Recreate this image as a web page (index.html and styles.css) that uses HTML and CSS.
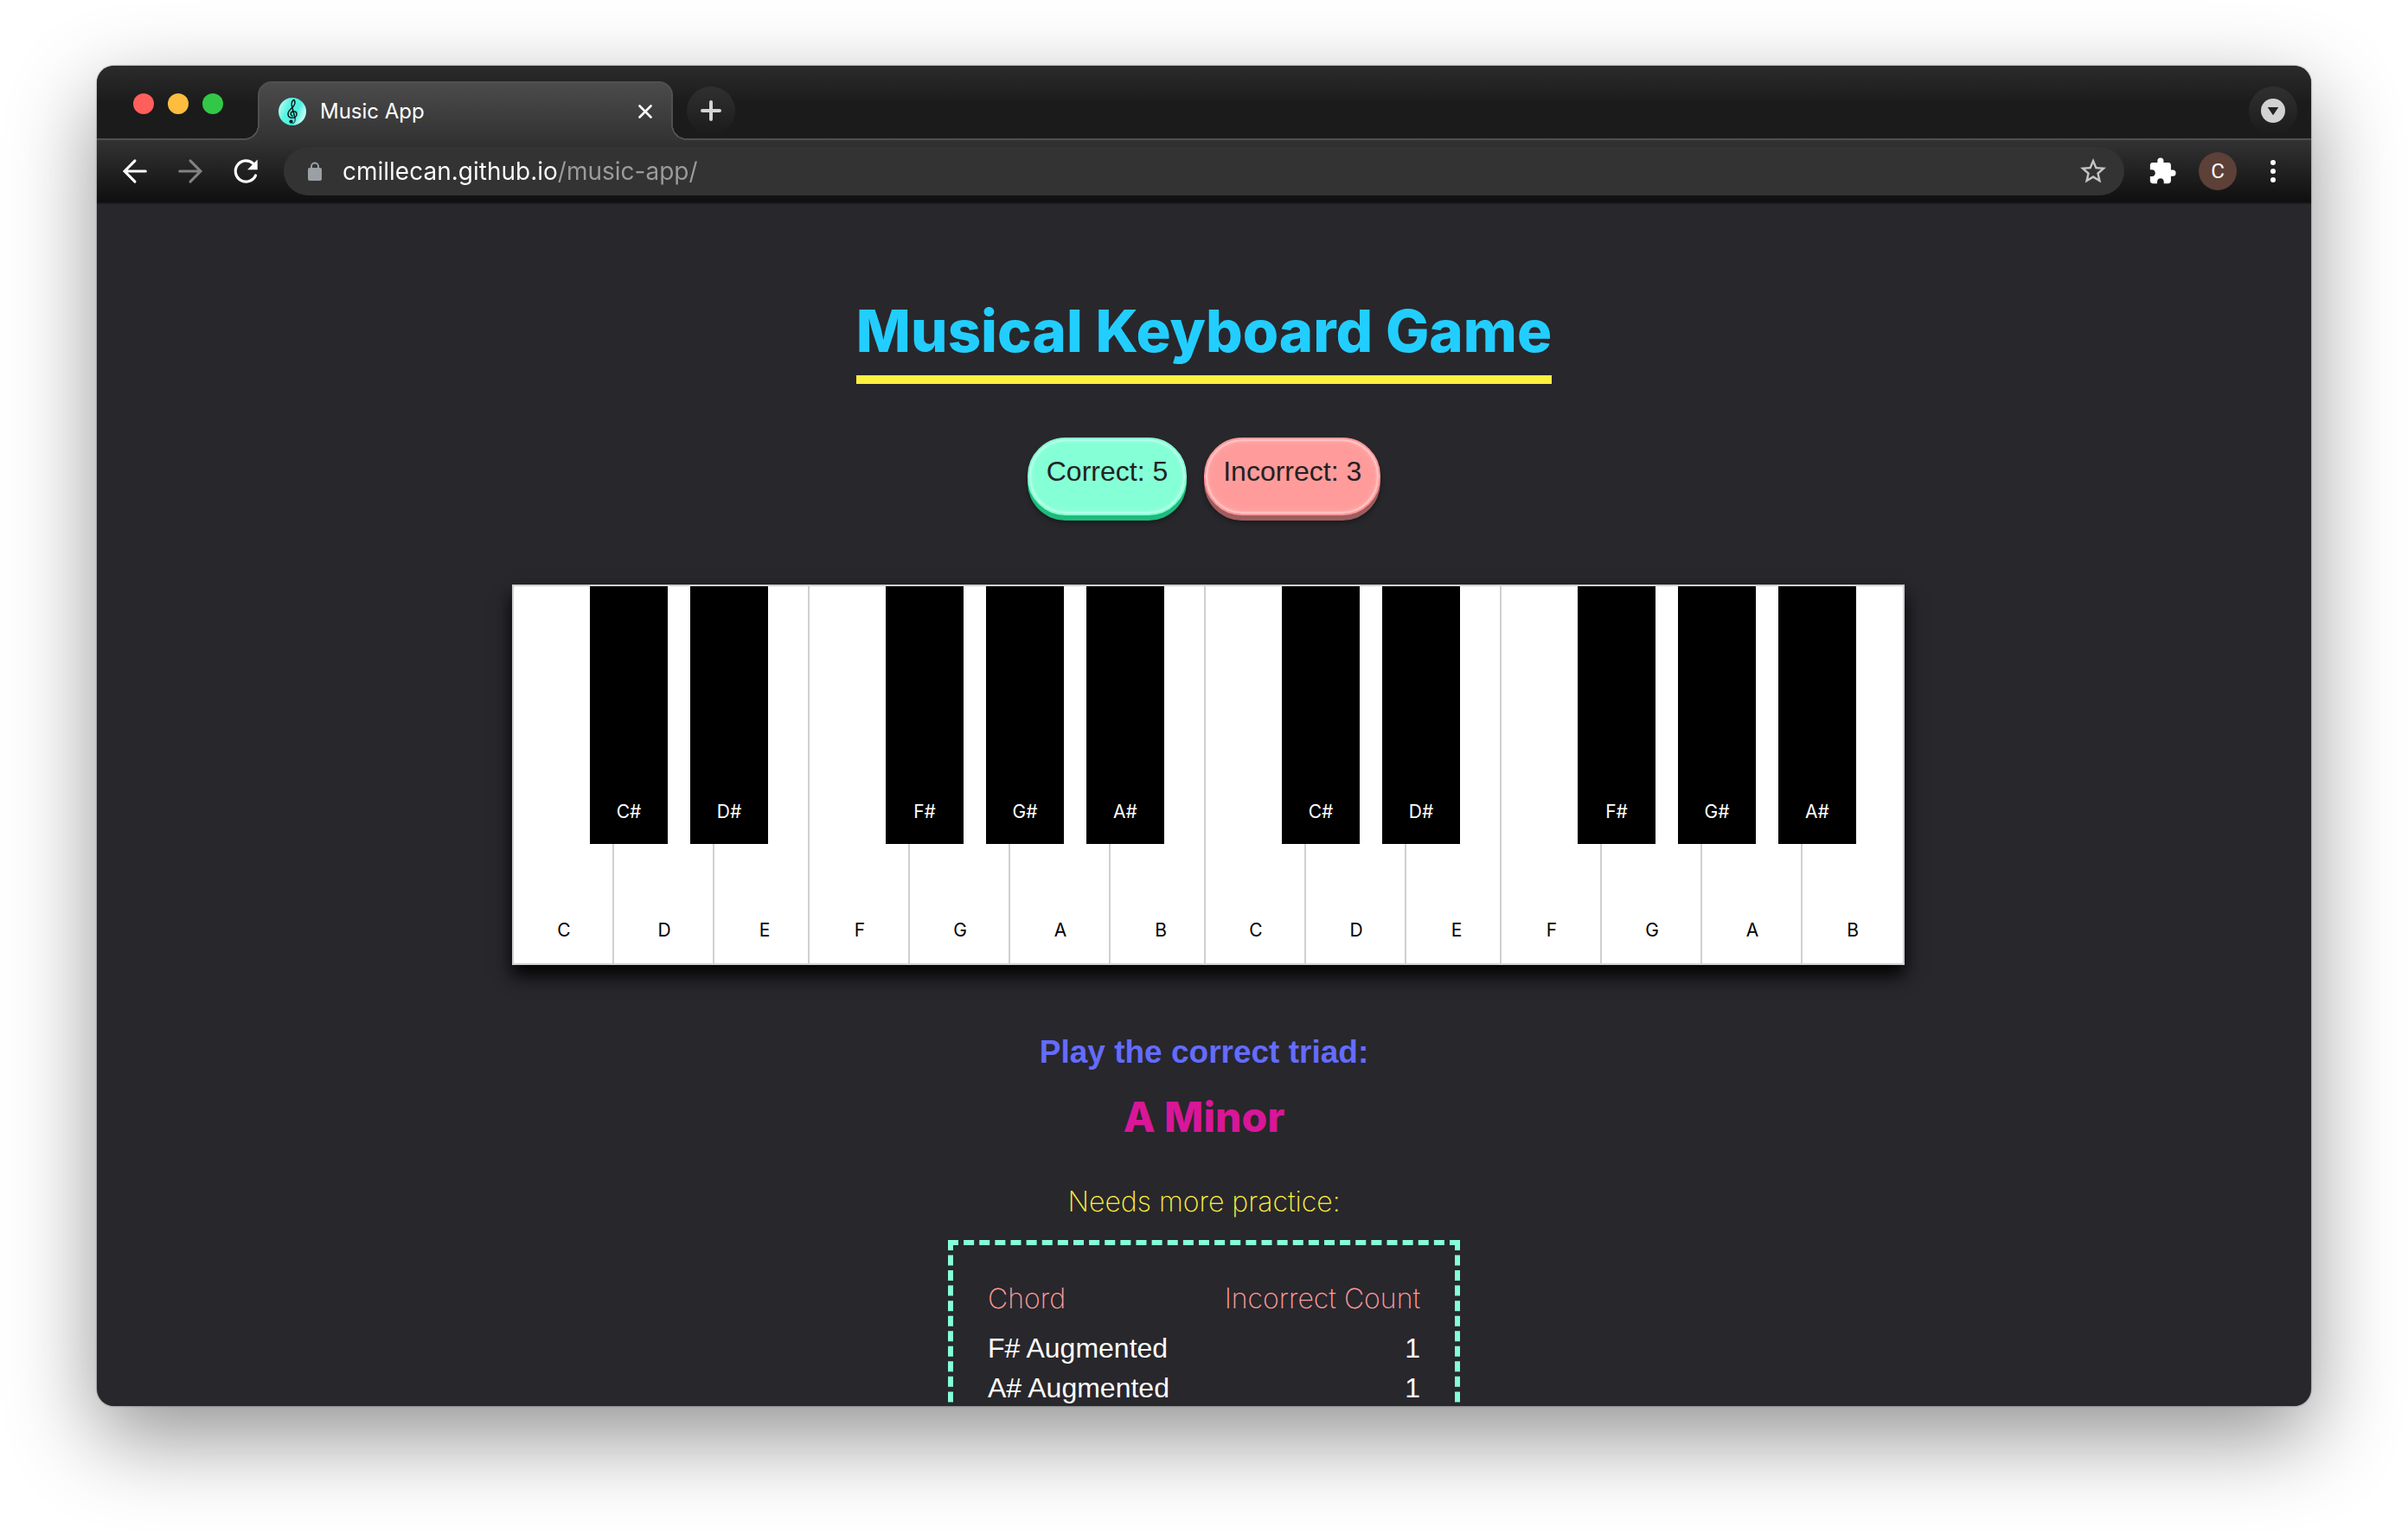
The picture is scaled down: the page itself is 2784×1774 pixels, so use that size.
FILE: index.html
```
<!DOCTYPE html>
<html lang="en">
<head>
<meta charset="utf-8">
<title>Music App</title>
<link rel="stylesheet" href="styles.css">
</head>
<body>
<div class="window">
  <header class="tab-strip">
    <div class="lights">
      <button class="light light-close" aria-label="Close window"></button>
      <button class="light light-minimize" aria-label="Minimize window"></button>
      <button class="light light-zoom" aria-label="Zoom window"></button>
    </div>
    <div class="tab">
      <svg class="favicon" viewBox="0 0 32 32" aria-hidden="true">
        <defs>
          <linearGradient id="disc" x1="0" y1="0" x2="1" y2="0.4">
            <stop offset="0" stop-color="#d8fff8"/>
            <stop offset="0.4" stop-color="#5cf5e4"/>
            <stop offset="0.75" stop-color="#4df0e0"/>
            <stop offset="1" stop-color="#b8fff4"/>
          </linearGradient>
        </defs>
        <circle cx="16" cy="16" r="16" fill="url(#disc)"/>
        <path d="M19 23.500L15.200 8.500C14.600 5.500 16.300 3 18 2.500C19.400 4.500 19.200 7.500 17 10.200C14.500 13 11 15 11 18.700C11 21.800 13.500 23.300 16.200 23.300C19.200 23.300 21 21.300 21 19.200C21 17.200 19.500 15.800 17.500 15.800C15.500 15.800 14.200 17.100 14.200 18.700C14.200 19.900 15 20.700 16 21" fill="none" stroke="#0a1a1a" stroke-width="1.500" stroke-linecap="round"/>
        <path d="M19 23.500C19.800 27.500 18 30 15.500 29.800" fill="none" stroke="#0a1a1a" stroke-width="1"/>
        <circle cx="14.500" cy="27.600" r="2.100" fill="#0a1a1a"/>
      </svg>
      <span class="tab-title">Music App</span>
      <button class="icon-button tab-close" aria-label="Close tab">
        <svg viewBox="0 0 16 16" width="16" height="16"><path d="M1.500 1.500l13 13M14.500 1.500l-13 13" stroke="#fff" stroke-width="2.600" stroke-linecap="round"/></svg>
      </button>
    </div>
    <button class="round-button" aria-label="New tab">
      <svg viewBox="0 0 24 24" width="24" height="24"><path d="M12 2v20M2 12h20" stroke="#d4d4d4" stroke-width="4" stroke-linecap="round"/></svg>
    </button>
    <button class="round-button tab-search" aria-label="Search tabs">
      <svg viewBox="0 0 28 28" width="28" height="28"><circle cx="14" cy="14" r="14" fill="#d2d2d2"/><path d="M7.700 10h12.600L14 19.300z" fill="#222"/></svg>
    </button>
  </header>

  <nav class="toolbar">
    <button class="icon-button" aria-label="Back">
      <svg viewBox="0 0 24 24" width="40" height="40"><path d="M19.400 12H5M12 4.700L4.800 12l7.200 7.300" fill="none" stroke="#fff" stroke-width="1.800" stroke-linecap="round"/></svg>
    </button>
    <button class="icon-button" aria-label="Forward">
      <svg viewBox="0 0 24 24" width="40" height="40"><path d="M4.600 12H19M12 4.700l7.200 7.300-7.200 7.300" fill="none" stroke="#828282" stroke-width="1.800" stroke-linecap="round"/></svg>
    </button>
    <button class="icon-button" aria-label="Reload">
      <svg viewBox="0 0 24 24" width="40" height="40"><path d="M18.900 15A7.300 7.300 0 1 1 17.400 6.800L19 8.500" fill="none" stroke="#fff" stroke-width="1.900" stroke-linecap="round"/><path d="M20.200 3.900v7h-7z" fill="#fff"/></svg>
    </button>
    <div class="omnibox">
      <svg class="lock" viewBox="0 0 24 24" width="40" height="24" aria-hidden="true"><path d="M8 10V6.500a4 4 0 0 1 8 0V10" fill="none" stroke="#9aa0a6" stroke-width="2"/><rect x="4" y="8" width="16" height="15" rx="2" fill="#9aa0a6"/></svg>
      <input class="url" type="text" value="cmillecan.github.io/music-app/" aria-label="Address">
      <button class="icon-button" aria-label="Bookmark this page">
        <svg viewBox="0 0 24 24" width="36" height="36"><path fill="#c4c4c4" d="M22 9.240l-7.190-.62L12 2 9.190 8.630 2 9.240l5.460 4.730L5.820 21 12 17.270 18.180 21l-1.630-7.030L22 9.240zM12 15.400l-3.760 2.270 1-4.280-3.320-2.880 4.380-.38L12 6.100l1.710 4.040 4.380.38-3.320 2.880 1 4.280L12 15.400z"/></svg>
      </button>
    </div>
    <button class="icon-button" aria-label="Extensions">
      <svg viewBox="0 0 24 24" width="34" height="34"><path fill="#fff" d="M20.500 11H19V7c0-1.100-.9-2-2-2h-4V3.500a2.500 2.500 0 0 0-5 0V5H4c-1.100 0-1.990.9-1.990 2v3.800H3.500c1.490 0 2.700 1.210 2.700 2.700s-1.210 2.700-2.700 2.700H2V20c0 1.100.9 2 2 2h3.800v-1.500c0-1.490 1.210-2.700 2.700-2.700s2.700 1.210 2.700 2.700V22H17c1.100 0 2-.9 2-2v-4h1.500a2.500 2.500 0 0 0 0-5z"/></svg>
    </button>
    <button class="avatar" aria-label="Profile">C</button>
    <button class="icon-button" aria-label="Menu">
      <svg viewBox="0 0 8 28" width="8" height="28"><g fill="#fff"><circle cx="4" cy="4" r="3"/><circle cx="4" cy="14" r="3"/><circle cx="4" cy="24" r="3"/></g></svg>
    </button>
  </nav>

  <main class="page">
    <h1 class="title">Musical Keyboard Game</h1>
    <div class="scores">
      <p class="score score-correct">Correct: 5</p>
      <p class="score score-incorrect">Incorrect: 3</p>
    </div>
    <div class="piano-wrap">
      <div class="piano">
        <button class="white">C</button>
        <button class="black">C#</button>
        <button class="white">D</button>
        <button class="black">D#</button>
        <button class="white">E</button>
        <button class="white joined">F</button>
        <button class="black">F#</button>
        <button class="white">G</button>
        <button class="black">G#</button>
        <button class="white">A</button>
        <button class="black">A#</button>
        <button class="white">B</button>
        <button class="white joined">C</button>
        <button class="black">C#</button>
        <button class="white">D</button>
        <button class="black">D#</button>
        <button class="white">E</button>
        <button class="white joined">F</button>
        <button class="black">F#</button>
        <button class="white">G</button>
        <button class="black">G#</button>
        <button class="white">A</button>
        <button class="black">A#</button>
        <button class="white">B</button>
      </div>
    </div>
    <h2 class="prompt">Play the correct triad:</h2>
    <p class="chord">A Minor</p>
    <h3 class="practice-title" id="practice">Needs more practice:</h3>
    <div class="practice">
      <table class="practice-table" aria-labelledby="practice">
        <thead>
          <tr><th scope="col">Chord</th><th scope="col">Incorrect Count</th></tr>
        </thead>
        <tbody>
          <tr><td>F# Augmented</td><td>1</td></tr>
          <tr><td>A# Augmented</td><td>1</td></tr>
        </tbody>
      </table>
    </div>
  </main>
</div>
</body>
</html>
```
FILE: styles.css
```
* {
  box-sizing: border-box;
}

body {
  margin: 0;
  height: 100vh;
  padding: 76px 112px 148px;
  background: #fff;
  font-family: "Liberation Sans", Arial, sans-serif;
  overflow: hidden;
}

h1, h2, h3, p {
  margin: 0;
}

button {
  padding: 0;
  border: 0;
  background: none;
  color: inherit;
  font: inherit;
}

svg {
  display: block;
}

.window {
  display: flex;
  flex-direction: column;
  height: 100%;
  border-radius: 20px;
  background: #28272c;
  overflow: hidden;
  box-shadow: 0 0 2px rgba(0, 0, 0, 0.6), 0 36px 100px rgba(0, 0, 0, 0.43);
}

/* Tab strip */

.tab-strip {
  flex: none;
  display: flex;
  align-items: flex-start;
  height: 86px;
  padding: 0 16px 0 42px;
  border-bottom: 2px solid #505050;
  background: linear-gradient(#2b2b2b, #1b1b1b 44px);
  font-family: Inter, sans-serif;
}

.lights {
  display: flex;
  gap: 16px;
  padding: 32px 40px 0 0;
}

.light {
  width: 24px;
  height: 24px;
  border-radius: 50%;
}

.light-close { background: #ff5f5a; }
.light-minimize { background: #ffbd3f; }
.light-zoom { background: #33c748; }

.tab {
  position: relative;
  display: flex;
  align-items: center;
  gap: 16px;
  width: 480px;
  height: 68px;
  margin: 18px 16px 0 0;
  padding: 0 22px;
  border: 2px solid #505050;
  border-bottom: 0;
  border-radius: 16px 16px 0 0;
  background: linear-gradient(#4b4b4b, #333);
}

/* Curved feet joining the tab to the strip line */
.tab::before,
.tab::after {
  content: "";
  position: absolute;
  bottom: 0;
  width: 18px;
  height: 18px;
}

.tab::before {
  left: -18px;
  background: radial-gradient(circle at 0 0, #1b1b1b 16px, #505050 16px, #505050 18px, #353535 18px);
}

.tab::after {
  right: -18px;
  background: radial-gradient(circle at 100% 0, #1b1b1b 16px, #505050 16px, #505050 18px, #353535 18px);
}

.favicon {
  width: 32px;
  height: 32px;
}

.tab-title {
  flex: 1;
  color: #fff;
  font-size: 24px;
  line-height: 32px;
}

.round-button {
  display: grid;
  place-items: center;
  width: 56px;
  height: 56px;
  margin-top: 24px;
  border-radius: 50%;
  background: linear-gradient(#303030, #1b1b1b);
}

.tab-search {
  margin-left: auto;
}

/* Toolbar */

.toolbar {
  flex: none;
  display: flex;
  align-items: center;
  gap: 24px;
  padding: 8px 24px;
  border-bottom: 2px solid #1a1a1a;
  background: linear-gradient(#333, #0f0f0f);
  font-family: Inter, sans-serif;
}

.icon-button {
  flex: none;
  display: grid;
  place-items: center;
  width: 40px;
  height: 40px;
}

.icon-button.tab-close {
  width: 16px;
}

.omnibox {
  flex: 1;
  display: flex;
  align-items: center;
  height: 56px;
  padding: 0 16px;
  border-radius: 28px;
  background: #333;
}

.lock {
  flex: none;
}

.url {
  flex: 1;
  min-width: 0;
  padding: 0 12px;
  border: 0;
  outline: 0;
  /* host in white, path in grey */
  background: linear-gradient(90deg, #fff 261px, #9c9c9c 261px);
  background-clip: text;
  -webkit-background-clip: text;
  color: transparent;
  font: 28px/40px Inter, sans-serif;
}

.avatar {
  flex: none;
  width: 44px;
  height: 44px;
  margin: 0 -2px;
  border-radius: 50%;
  background: #5d4037;
  color: #fff;
  font: 24px/44px Roboto, sans-serif;
}

/* Game page */

.page {
  flex: 1;
  min-height: 0;
  display: flex;
  flex-direction: column;
  align-items: center;
  padding-top: 100px;
  overflow: hidden;
}

.page > * {
  flex: none;
}

.title {
  padding-bottom: 4px;
  border-bottom: 10px solid #fff03f;
  color: #22ceff;
  font: 800 67px/94px Inter, sans-serif;
}

.scores {
  display: flex;
  gap: 20px;
  margin-top: 62px;
}

.score {
  padding: 18px 20px 30px;
  border: 2px solid;
  border-radius: 44px;
  color: #222;
  font-size: 32px;
  line-height: 38px;
}

.score-correct {
  border-color: #84ffd6;
  background: #84ffd6;
  box-shadow: 0 6px #1dbb7c, 0 8px 6px rgba(0, 0, 0, 0.4), inset 0 0 2px 2px rgba(255, 255, 255, 0.4), inset 0 0 10px rgba(255, 255, 255, 0.3);
}

.score-incorrect {
  border-color: #ff9b9b;
  background: #ff9b9b;
  box-shadow: 0 6px #9f5c5e, 0 8px 6px rgba(0, 0, 0, 0.4), inset 0 0 2px 2px rgba(255, 255, 255, 0.4), inset 0 0 10px rgba(255, 255, 255, 0.3);
}

.piano-wrap {
  margin-top: 80px;
  padding-left: 10px;
}

.piano {
  display: flex;
  align-items: flex-start;
  box-shadow: 0 12px 20px #000;
  font: 400 21px/24px Inter, sans-serif;
}

.white,
.black {
  display: flex;
  align-items: flex-end;
  justify-content: center;
}

.white {
  width: 120px;
  height: 440px;
  padding-bottom: 26px;
  border: 2px solid #d0d0d0;
  background: #fff;
  color: #000;
}

.white.joined {
  margin-left: -10px;
}

.black {
  position: relative;
  z-index: 1;
  width: 90px;
  height: 298px;
  margin: 2px -64px 0 -30px;
  padding-bottom: 25px;
  background: #000;
  color: #fff;
}

.prompt {
  margin-top: 80px;
  color: #646cff;
  font-size: 37px;
  line-height: 42px;
}

.chord {
  margin-top: 18px;
  color: #d91698;
  font: 800 48px/72px Inter, sans-serif;
}

.practice-title {
  margin-top: 38px;
  color: #fff03f;
  font: 200 32px/48px Inter, sans-serif;
}

.practice {
  width: 592px;
  margin-top: 20px;
  padding: 40px;
  border: 6px dashed #84ffd6;
}

.practice-table {
  width: 100%;
  border-collapse: collapse;
  color: #fff;
  font-size: 32px;
  line-height: 46px;
}

.practice-table th {
  padding: 0 0 12px;
  color: #ff9b9b;
  font: 200 32px/44px Inter, sans-serif;
  text-align: left;
}

.practice-table td {
  padding: 0;
}

.practice-table th:last-child,
.practice-table td:last-child {
  text-align: right;
}
```
